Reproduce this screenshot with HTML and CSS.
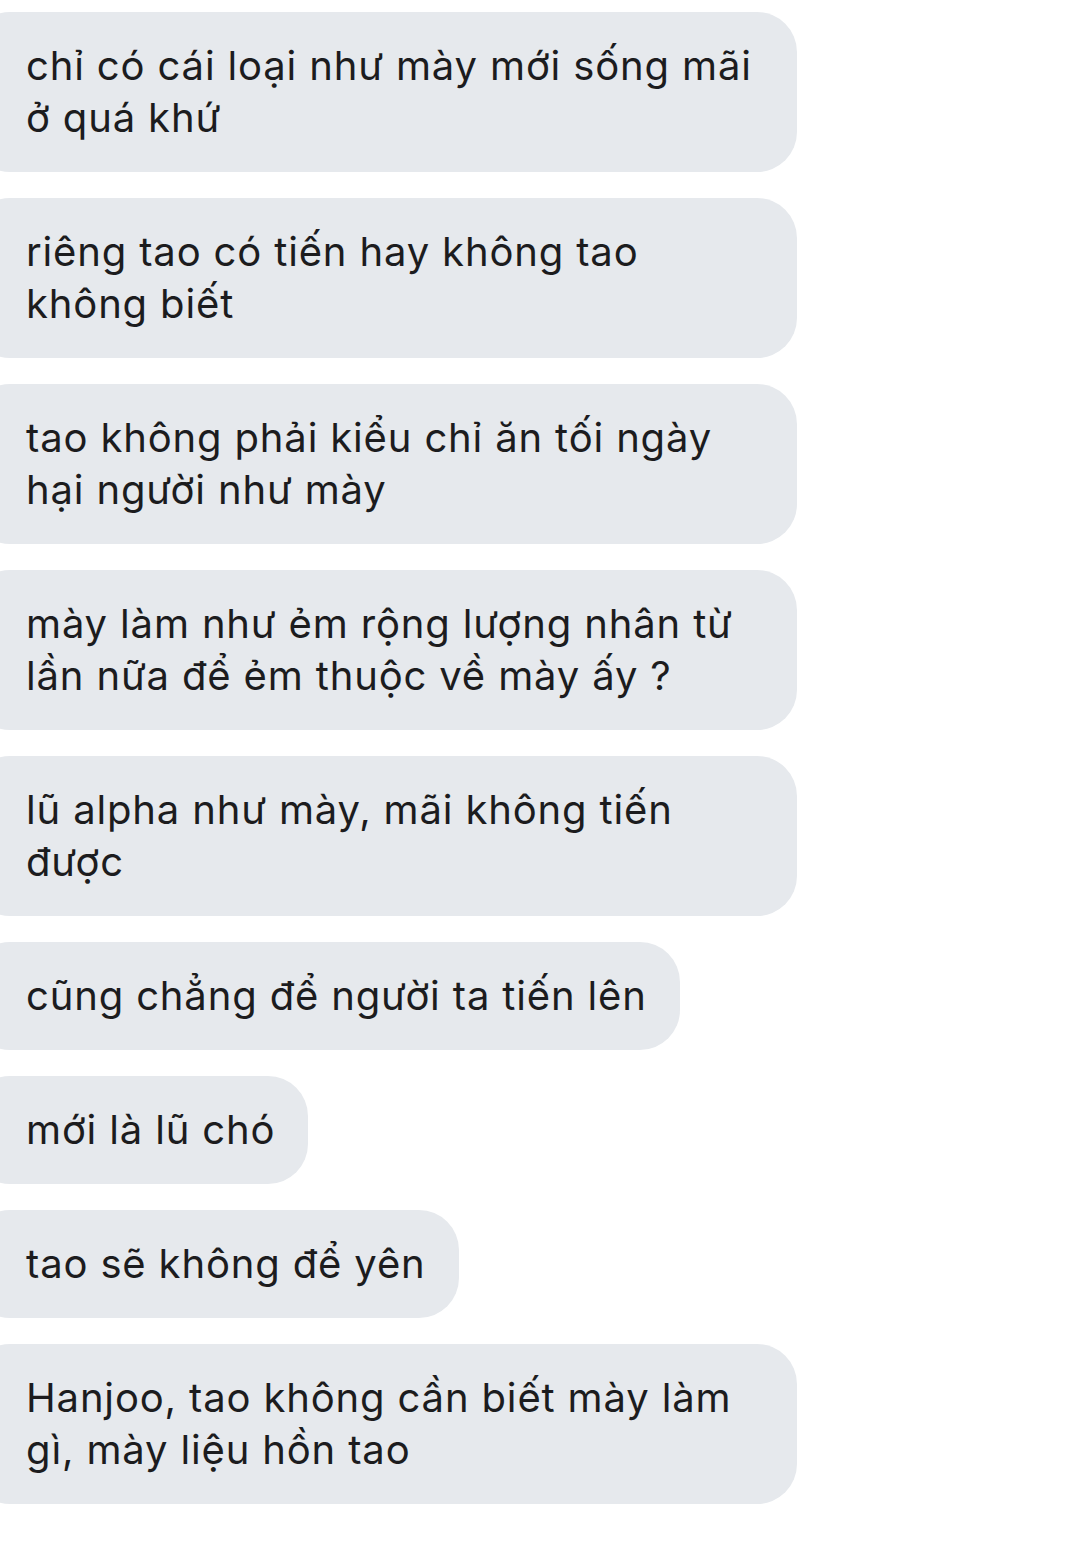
FILE: index.html
```html
<!DOCTYPE html>
<html lang="vi">

<head>
    <meta charset="UTF-8">
    <title>Tin nhắn</title>
    <link rel="stylesheet" href="styles.css">
</head>

<body>
    <div class="thread">
        <!-- incoming messages -->
        <div class="bubble">chỉ có cái loại như mày mới sống mãi ở quá khứ</div>
        <div class="bubble">riêng tao có tiến hay không tao không biết</div>
        <div class="bubble">tao không phải kiểu chỉ ăn tối ngày hại người như mày</div>
        <div class="bubble">mày làm như ẻm rộng lượng nhân từ lần nữa để ẻm thuộc về mày ấy ?</div>
        <div class="bubble">lũ alpha như mày, mãi không tiến được</div>
        <div class="bubble">cũng chẳng để người ta tiến lên</div>
        <div class="bubble">mới là lũ chó</div>
        <div class="bubble">tao sẽ không để yên</div>
        <div class="bubble">Hanjoo, tao không cần biết mày làm gì, mày liệu hồn tao</div>
    </div>
</body>

</html>
```

FILE: styles.css
```css
body {
    margin: 0;
    padding: 0;
    background-color: #fff;
    font-family: Inter, "Noto Sans", sans-serif;
    color: #1c1c1e;
    overflow-x: hidden;
}

.thread {
    display: flex;
    flex-direction: column;
    align-items: flex-start;
    gap: 26px;
    padding-top: 12px;
}

.bubble {
    box-sizing: border-box;
    max-width: 827px;
    margin-left: -30px;
    padding: 28px 33px 28px 56px;
    background-color: #e6e9ed;
    border-radius: 40px;
    font-size: 40px;
    line-height: 52px;
    letter-spacing: 0.85px;
}
```
